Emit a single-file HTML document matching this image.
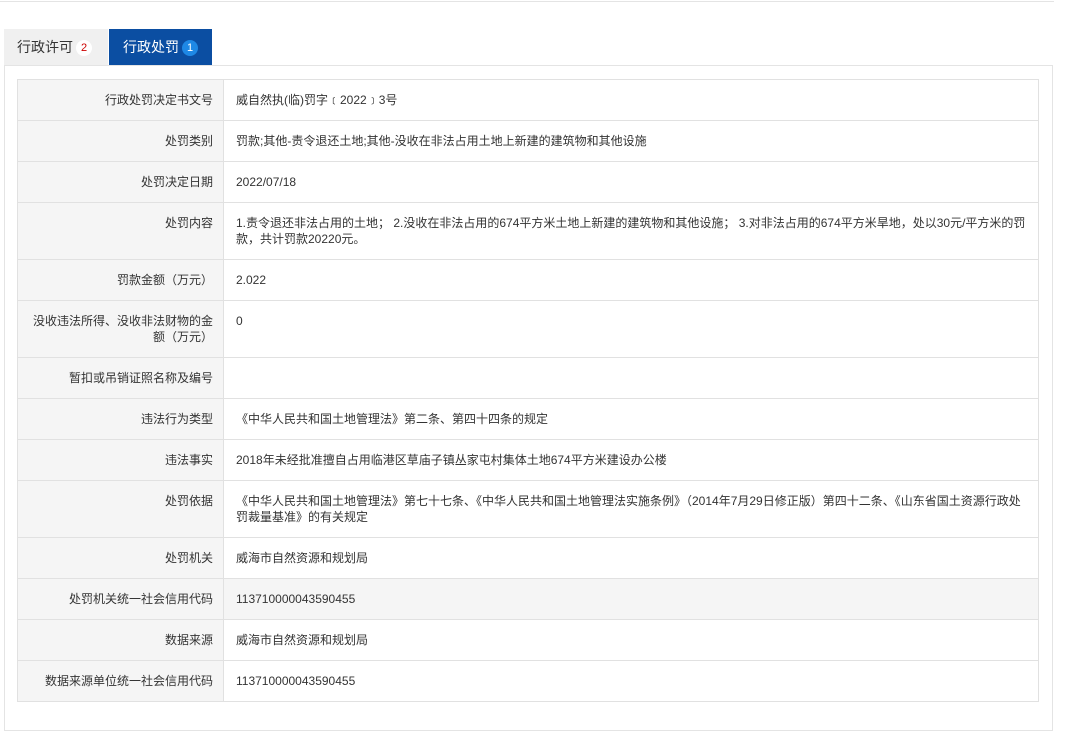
<!DOCTYPE html>
<html><head><meta charset="utf-8"><style>
*{margin:0;padding:0;box-sizing:border-box}
body{width:1067px;height:735px;background:#fff;font-family:"Liberation Sans","Noto Sans CJK SC",sans-serif;font-size:12px;color:#333;position:relative;overflow:hidden}
.topline{position:absolute;left:0;top:1px;width:1054px;height:1px;background:#e4e4e4}
.tab{position:absolute;top:29px;height:36px;line-height:36px;font-size:14px}
.t1{left:4px;width:104px;background:#f0f0f0;color:#333;padding-left:13px}
.t2{left:109px;width:103px;background:#0b4ea2;color:#fff;padding-left:14px}
.b{display:inline-block;width:16px;height:16px;border-radius:50%;font-size:11px;line-height:16px;text-align:center;vertical-align:1px;margin-left:3px}
.t1 .b{background:#fff;color:#c00}
.t2 .b{background:#1e88e5;color:#fff}
.box{position:absolute;left:4px;top:65px;width:1049px;height:666px;border:1px solid #e4e4e4}
table{position:absolute;left:17px;top:79px;width:1022px;border-collapse:collapse}
td{border:1px solid #e1e1e1;vertical-align:top;padding:12px 12px 0;line-height:16px}
td.l{width:206px;background:#f5f5f5;text-align:right;padding-right:10px}
td.v{padding-left:12px}
</style></head><body>
<div class="topline"></div>
<div class="tab t1">行政许可<span class="b">2</span></div>
<div class="tab t2">行政处罚<span class="b">1</span></div>
<div class="box"></div>
<table>
<tr style="height:41px"><td class="l">行政处罚决定书文号</td><td class="v">威自然执(临)罚字﹝2022﹞3号</td></tr>
<tr style="height:41px"><td class="l">处罚类别</td><td class="v">罚款;其他-责令退还土地;其他-没收在非法占用土地上新建的建筑物和其他设施</td></tr>
<tr style="height:41px"><td class="l">处罚决定日期</td><td class="v">2022/07/18</td></tr>
<tr style="height:57px"><td class="l">处罚内容</td><td class="v">1.责令退还非法占用的土地； 2.没收在非法占用的674平方米土地上新建的建筑物和其他设施； 3.对非法占用的674平方米旱地，处以30元/平方米的罚款，共计罚款20220元。</td></tr>
<tr style="height:41px"><td class="l">罚款金额（万元）</td><td class="v">2.022</td></tr>
<tr style="height:57px"><td class="l">没收违法所得、没收非法财物的金额（万元）</td><td class="v">0</td></tr>
<tr style="height:41px"><td class="l">暂扣或吊销证照名称及编号</td><td class="v"></td></tr>
<tr style="height:41px"><td class="l">违法行为类型</td><td class="v">《中华人民共和国土地管理法》第二条、第四十四条的规定</td></tr>
<tr style="height:41px"><td class="l">违法事实</td><td class="v">2018年未经批准擅自占用临港区草庙子镇丛家屯村集体土地674平方米建设办公楼</td></tr>
<tr style="height:57px"><td class="l">处罚依据</td><td class="v">《中华人民共和国土地管理法》第七十七条、《中华人民共和国土地管理法实施条例》（2014年7月29日修正版）第四十二条、《山东省国土资源行政处罚裁量基准》的有关规定</td></tr>
<tr style="height:41px"><td class="l">处罚机关</td><td class="v">威海市自然资源和规划局</td></tr>
<tr style="height:41px"><td class="l">处罚机关统一社会信用代码</td><td class="v" style="background:#f5f5f5">113710000043590455</td></tr>
<tr style="height:41px"><td class="l">数据来源</td><td class="v">威海市自然资源和规划局</td></tr>
<tr style="height:41px"><td class="l">数据来源单位统一社会信用代码</td><td class="v">113710000043590455</td></tr>
</table>
</body></html>
